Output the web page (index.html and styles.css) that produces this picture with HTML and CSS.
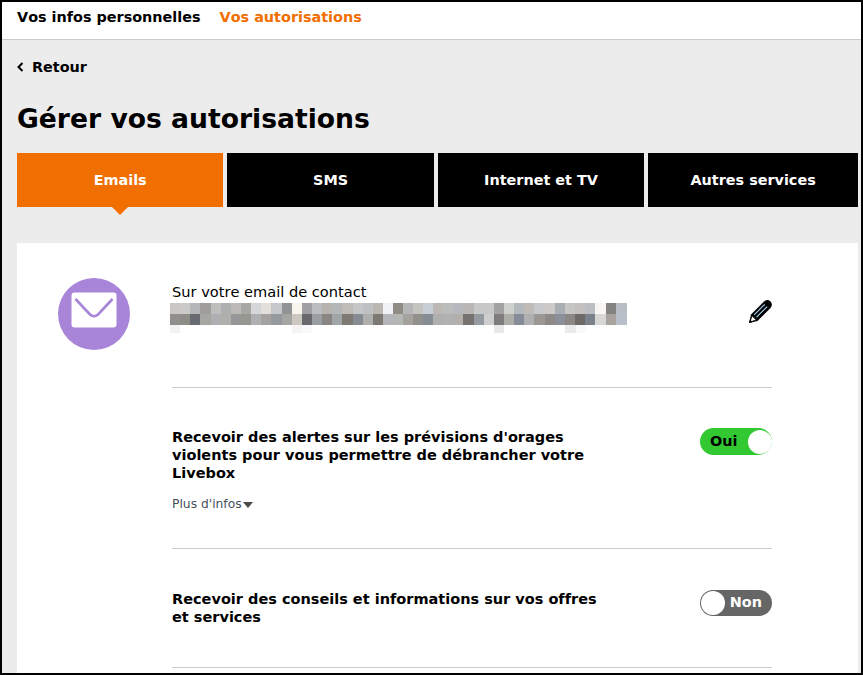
FILE: index.html
```html
<!DOCTYPE html>
<html lang="fr">
<head>
<meta charset="utf-8">
<title>Gérer vos autorisations</title>
<link rel="stylesheet" href="styles.css">
</head>
<body>
<div class="frame">
  <nav class="topnav">
    <a class="topnav-link">Vos infos personnelles</a>
    <a class="topnav-link is-active">Vos autorisations</a>
  </nav>
  <main class="page">
    <a class="back">
      <svg class="back-icon" width="7" height="10" viewBox="0 0 7 10"><path d="M5.5 1 L1.5 5 L5.5 9" fill="none" stroke="#000" stroke-width="2"/></svg>
      <span>Retour</span>
    </a>
    <h1 class="title">Gérer vos autorisations</h1>
    <div class="tabs">
      <a class="tab is-active">Emails</a>
      <a class="tab">SMS</a>
      <a class="tab">Internet et TV</a>
      <a class="tab">Autres services</a>
    </div>
    <section class="card">
      <div class="avatar">
        <svg width="46" height="36" viewBox="0 0 46 36"><rect x="0.5" y="0.5" width="45" height="35" rx="3" fill="#fff"/><path d="M4.5 7 L19 22.500 Q23 26 27 22.500 L41.500 7" fill="none" stroke="#a885d8" stroke-width="2.600"/></svg>
      </div>
      <div class="content">
        <div class="contact">
          <div class="contact-text">
            <div class="contact-label">Sur votre email de contact</div>
            <svg class="blur" width="460" height="30" viewBox="0 0 460 30" shape-rendering="crispEdges">
              <g>
                <rect x="0" y="0" width="10" height="11" fill="#c9c8c6"/><rect x="10" y="0" width="10" height="11" fill="#cbcac9"/><rect x="20" y="0" width="10" height="11" fill="#b4b6b8"/><rect x="30" y="0" width="11" height="11" fill="#9f9e9b"/><rect x="41" y="0" width="10" height="11" fill="#bdbdbc"/><rect x="51" y="0" width="10" height="11" fill="#adafb0"/><rect x="61" y="0" width="10" height="11" fill="#bcbab7"/><rect x="71" y="0" width="10" height="11" fill="#a7a7a4"/><rect x="81" y="0" width="10" height="11" fill="#d5d6d8"/><rect x="91" y="0" width="10" height="11" fill="#e3dfda"/><rect x="101" y="0" width="11" height="11" fill="#c6c7c9"/><rect x="112" y="0" width="10" height="11" fill="#929396"/><rect x="122" y="0" width="10" height="11" fill="#f8f5ec"/><rect x="132" y="0" width="10" height="11" fill="#a0a0a2"/><rect x="142" y="0" width="10" height="11" fill="#b9bdc0"/><rect x="152" y="0" width="10" height="11" fill="#b7b4b0"/><rect x="162" y="0" width="10" height="11" fill="#b4b6b7"/><rect x="172" y="0" width="11" height="11" fill="#bfbbb7"/><rect x="183" y="0" width="10" height="11" fill="#c5c6c8"/><rect x="193" y="0" width="10" height="11" fill="#bfc0c1"/><rect x="203" y="0" width="10" height="11" fill="#bbb7b3"/><rect x="213" y="0" width="10" height="11" fill="#eff2f7"/><rect x="223" y="0" width="10" height="11" fill="#8e8c85"/><rect x="233" y="0" width="10" height="11" fill="#b4b6b8"/><rect x="243" y="0" width="10" height="11" fill="#c4c4c1"/><rect x="253" y="0" width="10" height="11" fill="#c8cfd4"/><rect x="263" y="0" width="10" height="11" fill="#bdb8b5"/><rect x="273" y="0" width="10" height="11" fill="#bbbcbc"/><rect x="283" y="0" width="10" height="11" fill="#b5b8bc"/><rect x="293" y="0" width="11" height="11" fill="#bab6b4"/><rect x="304" y="0" width="10" height="11" fill="#c8c8c8"/><rect x="314" y="0" width="10" height="11" fill="#c8c8c8"/><rect x="324" y="0" width="10" height="11" fill="#a3a3a3"/><rect x="334" y="0" width="10" height="11" fill="#cfd1ce"/><rect x="344" y="0" width="10" height="11" fill="#b4b9be"/><rect x="354" y="0" width="10" height="11" fill="#bfbbb8"/><rect x="364" y="0" width="11" height="11" fill="#c8c9ca"/><rect x="375" y="0" width="10" height="11" fill="#cccbc9"/><rect x="385" y="0" width="10" height="11" fill="#a9aeb2"/><rect x="395" y="0" width="10" height="11" fill="#c6c6c5"/><rect x="405" y="0" width="10" height="11" fill="#c2c1c0"/><rect x="415" y="0" width="10" height="11" fill="#bcbec3"/><rect x="425" y="0" width="11" height="11" fill="#f7f6f3"/><rect x="436" y="0" width="10" height="11" fill="#838380"/><rect x="446" y="0" width="11" height="11" fill="#b9bec5"/>
              </g>
              <g>
                <rect x="0" y="11" width="10" height="11" fill="#908f8e"/><rect x="10" y="11" width="10" height="11" fill="#8e8c87"/><rect x="20" y="11" width="10" height="11" fill="#686c72"/><rect x="30" y="11" width="11" height="11" fill="#a5a7a2"/><rect x="41" y="11" width="10" height="11" fill="#adafb3"/><rect x="51" y="11" width="10" height="11" fill="#b1afac"/><rect x="61" y="11" width="10" height="11" fill="#979698"/><rect x="71" y="11" width="10" height="11" fill="#979792"/><rect x="81" y="11" width="10" height="11" fill="#aeb0b1"/><rect x="91" y="11" width="10" height="11" fill="#a3a2a0"/><rect x="101" y="11" width="11" height="11" fill="#959a9f"/><rect x="112" y="11" width="10" height="11" fill="#a5a6a3"/><rect x="122" y="11" width="10" height="11" fill="#cdc8bf"/><rect x="132" y="11" width="10" height="11" fill="#68686d"/><rect x="142" y="11" width="10" height="11" fill="#9a9da1"/><rect x="152" y="11" width="10" height="11" fill="#8a8684"/><rect x="162" y="11" width="10" height="11" fill="#a0a5a8"/><rect x="172" y="11" width="11" height="11" fill="#7e7a72"/><rect x="183" y="11" width="10" height="11" fill="#878b92"/><rect x="193" y="11" width="10" height="11" fill="#afafad"/><rect x="203" y="11" width="10" height="11" fill="#7c7974"/><rect x="213" y="11" width="10" height="11" fill="#b4b6bc"/><rect x="223" y="11" width="10" height="11" fill="#b4b7b4"/><rect x="233" y="11" width="10" height="11" fill="#a5a19c"/><rect x="243" y="11" width="10" height="11" fill="#92908c"/><rect x="253" y="11" width="10" height="11" fill="#848c94"/><rect x="263" y="11" width="10" height="11" fill="#b0afb0"/><rect x="273" y="11" width="10" height="11" fill="#b1b1b2"/><rect x="283" y="11" width="10" height="11" fill="#b3afac"/><rect x="293" y="11" width="11" height="11" fill="#76726f"/><rect x="304" y="11" width="10" height="11" fill="#969ba2"/><rect x="314" y="11" width="10" height="11" fill="#cecece"/><rect x="324" y="11" width="10" height="11" fill="#7e7c7c"/><rect x="334" y="11" width="10" height="11" fill="#aeaea8"/><rect x="344" y="11" width="10" height="11" fill="#868c98"/><rect x="354" y="11" width="10" height="11" fill="#b0b0b2"/><rect x="364" y="11" width="11" height="11" fill="#9b9893"/><rect x="375" y="11" width="10" height="11" fill="#8e8a88"/><rect x="385" y="11" width="10" height="11" fill="#8b8f9a"/><rect x="395" y="11" width="10" height="11" fill="#8b8784"/><rect x="405" y="11" width="10" height="11" fill="#6d6a68"/><rect x="415" y="11" width="10" height="11" fill="#7b828c"/><rect x="425" y="11" width="11" height="11" fill="#d7d7d6"/><rect x="436" y="11" width="10" height="11" fill="#a8a39d"/><rect x="446" y="11" width="11" height="11" fill="#b9bfc8"/>
              </g>
              <g>
                <rect x="0" y="22" width="10" height="8" fill="#f2f2f2"/><rect x="122" y="22" width="10" height="8" fill="#f6f4f2"/><rect x="132" y="22" width="10" height="8" fill="#f8f9fb"/><rect x="324" y="22" width="10" height="8" fill="#e8e8e8"/><rect x="395" y="22" width="11" height="8" fill="#eaeaea"/><rect x="406" y="22" width="10" height="8" fill="#f8f9fb"/>
              </g>
            </svg>
          </div>
          <svg class="pencil" width="25" height="25" viewBox="0 0 25 25">
            <path d="M1 24 L3 15.500 L15.500 3 Q19 -0.500 22.500 2.500 Q25.500 6 22 9.500 L9.500 22 Z" fill="#000"/>
            <path d="M2 23 L4 16.800 L8.300 21 Z" fill="#fff" stroke="#000" stroke-width="0.800"/>
            <path d="M1 24 L2 20.500 L4.500 23 Z" fill="#000"/>
            <path d="M6.200 15.800 L16.800 5.300 M8.500 18.200 L19.200 7.700" stroke="#a8d8f5" stroke-width="1.100" fill="none"/>
          </svg>
        </div>
        <div class="option option-first">
          <div class="option-body">
            <p class="option-label">Recevoir des alertes sur les prévisions d'orages violents pour vous permettre de débrancher votre Livebox</p>
            <a class="more">Plus d'infos<span class="more-caret"></span></a>
          </div>
          <div class="toggle is-on"><span class="toggle-text">Oui</span><span class="knob"></span></div>
        </div>
        <div class="option option-second">
          <div class="option-body">
            <p class="option-label">Recevoir des conseils et informations sur vos offres et services</p>
          </div>
          <div class="toggle is-off"><span class="knob"></span><span class="toggle-text">Non</span></div>
        </div>
      </div>
    </section>
  </main>
</div>
</body>
</html>
```
FILE: styles.css
```css
* { box-sizing: border-box; }
html, body { margin: 0; padding: 0; height: 100%; overflow: hidden; }
body { font-family: "DejaVu Sans", sans-serif; color: #000; background: #fff; text-rendering: optimizeSpeed; font-kerning: none; }
.frame { height: 675px; border: 2px solid #000; display: flex; flex-direction: column; overflow: hidden; }
.topnav { height: 38px; flex: none; background: #fff; border-bottom: 1px solid #ccc; display: flex; gap: 19px; align-items: center; padding: 0 15px 7px; }
.topnav-link { font-size: 14.4px; font-weight: 700; }
.topnav-link.is-active { color: #f16e00; }
.page { flex: 1; background: #ececec; padding: 0 3px 0 15px; min-height: 0; display: flex; flex-direction: column; }
.back { display: flex; align-items: center; gap: 8px; font-size: 14.4px; font-weight: 700; margin-top: 18px; height: 18px; }
.title { margin: 23px 0 0; font-size: 26.6px; line-height: 40px; font-weight: 700; height: 40px; }
.tabs { display: flex; gap: 4px; margin-top: 14px; }
.tab { position: relative; flex: 0 0 206.4px; height: 54px; background: #000; color: #fff; font-size: 14.4px; font-weight: 700; display: flex; align-items: center; justify-content: center; }
.tab:last-child { flex: 1; }
.tab.is-active { background: #f16e00; }
.tab.is-active::after { content: ""; position: absolute; left: 50%; bottom: -8px; margin-left: -8px; border: 8px solid transparent; border-top-color: #f16e00; border-bottom-width: 0; }
.card { flex: 1; margin-top: 36px; background: #fff; display: flex; gap: 42px; padding: 35px 86px 0 41px; min-height: 0; }
.avatar { width: 72px; height: 72px; flex: none; border-radius: 50%; background: #a885d8; display: flex; align-items: center; justify-content: center; padding-bottom: 8px; }
.content { flex: 1; min-width: 0; }
.contact { display: flex; justify-content: space-between; height: 110px; border-bottom: 1px solid #ccc; }
.contact-text { padding-top: 5px; }
.contact-label { font-size: 14.6px; line-height: 18px; margin-bottom: 2px; }
.blur { display: block; margin-left: -2px; }
.pencil { margin: 21px -1px 0 0; }
.option { display: flex; justify-content: space-between; border-bottom: 1px solid #ccc; }
.option-first { height: 161px; padding-top: 40px; }
.option-second { height: 119px; padding-top: 41px; }
.option-label { margin: 0; width: 440px; font-size: 14.5px; line-height: 18px; font-weight: 700; }
.more { display: flex; align-items: center; margin-top: 14px; font-size: 12.3px; line-height: 16px; color: #44505c; }
.more-caret { margin: 1px 0 0 1px; border: 5px solid transparent; border-top: 6px solid #4a4a4a; border-bottom-width: 0; }
.toggle { width: 72px; height: 27px; border-radius: 14px; display: flex; align-items: center; justify-content: space-between; font-size: 14.4px; font-weight: 700; flex: none; padding: 0; }
.toggle-text { line-height: 1; }
.toggle.is-on { background: #32c832; color: #000; padding-left: 10px; }
.toggle.is-off { background: #666; color: #fff; padding-right: 10px; height: 26px; }
.toggle.is-off .toggle-text { margin-top: -1px; }
.knob { width: 25px; height: 25px; border-radius: 50%; background: #fff; }
.is-on .knob { margin-right: 0; width: 24px; height: 24px; }
.is-off .knob { margin-left: 1px; width: 24px; height: 24px; }
```
